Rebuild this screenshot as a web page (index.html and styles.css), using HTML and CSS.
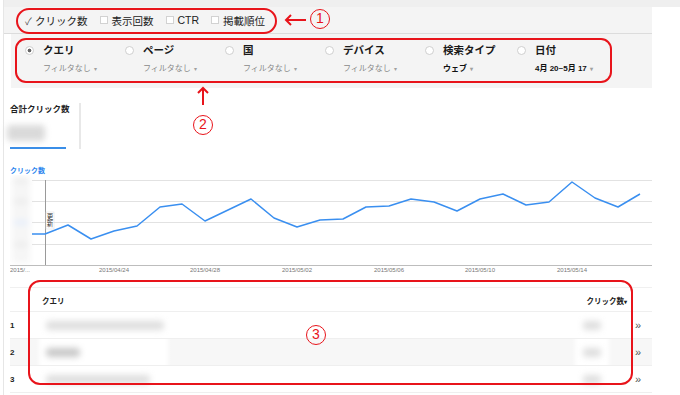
FILE: index.html
```html
<!DOCTYPE html>
<html>
<head>
    <meta charset="utf-8">
    <title>検索アナリティクス</title>
    <link rel="stylesheet" href="styles.css">
</head>
<body>
    <div class="page">
        <div class="topstrip"></div>

        <!-- metric checkboxes -->
        <div class="metrics">
            <span class="metric"><span class="tick">✓</span>クリック数</span>
            <span class="metric"><span class="box"></span>表示回数</span>
            <span class="metric"><span class="box"></span>CTR</span>
            <span class="metric"><span class="box"></span>掲載順位</span>
        </div>

        <!-- grouping / filters -->
        <div class="dims">
            <div class="dim">
                <span class="radio on"></span>
                <div>
                    <div class="dim-title">クエリ</div>
                    <div class="dim-sub">フィルタなし <span class="caret">▾</span></div>
                </div>
            </div>
            <div class="dim">
                <span class="radio"></span>
                <div>
                    <div class="dim-title">ページ</div>
                    <div class="dim-sub">フィルタなし <span class="caret">▾</span></div>
                </div>
            </div>
            <div class="dim">
                <span class="radio"></span>
                <div>
                    <div class="dim-title">国</div>
                    <div class="dim-sub">フィルタなし <span class="caret">▾</span></div>
                </div>
            </div>
            <div class="dim">
                <span class="radio"></span>
                <div>
                    <div class="dim-title">デバイス</div>
                    <div class="dim-sub">フィルタなし <span class="caret">▾</span></div>
                </div>
            </div>
            <div class="dim">
                <span class="radio"></span>
                <div>
                    <div class="dim-title">検索タイプ</div>
                    <div class="dim-sub set">ウェブ <span class="caret">▾</span></div>
                </div>
            </div>
            <div class="dim">
                <span class="radio"></span>
                <div>
                    <div class="dim-title">日付</div>
                    <div class="dim-sub set">4月 20~5月 17 <span class="caret">▾</span></div>
                </div>
            </div>
        </div>

        <div class="summary">
            <div class="total">
                <div class="total-label">合計クリック数</div>
                <div class="blur-value"></div>
                <div class="total-bar"></div>
            </div>
        </div>

        <div class="chart-label">クリック数</div>
        <svg class="chart" width="642" height="100" viewBox="0 0 642 100">
            <defs>
                <filter id="soft" x="-50%" y="-50%" width="200%" height="200%">
                    <feGaussianBlur stdDeviation="3"/>
                </filter>
            </defs>
            <g filter="url(#soft)" fill="#ececec">
                <rect x="2" y="2" width="18" height="86" fill="#f6f6f6"/>
                <rect x="4" y="3" width="14" height="5"/>
                <rect x="4" y="24" width="14" height="5"/>
                <rect x="4" y="45" width="14" height="5" fill="#e6eefb"/>
                <rect x="4" y="67" width="14" height="5"/>
            </g>
            <g stroke="#e2e2e2" stroke-width="1">
                <line x1="22" y1="5.5" x2="642" y2="5.5"/>
                <line x1="22" y1="26.5" x2="642" y2="26.5"/>
                <line x1="22" y1="47.5" x2="642" y2="47.5"/>
                <line x1="22" y1="69.5" x2="642" y2="69.5"/>
            </g>
            <line x1="0" y1="90.5" x2="642" y2="90.5" stroke="#bdbdbd"/>
            <line x1="35.5" y1="5" x2="35.5" y2="90" stroke="#9a9a9a"/>
            <polyline fill="none" stroke="#3a8ff0" stroke-width="1.5" stroke-linejoin="round"
                points="22,59 35,59 58,50 81,64 104,56 127,51 150,32 172,29 195,46 218,35 241,24 264,43 287,52 310,45 333,44 356,32 379,31 401,24 424,27 447,36 470,24 493,19 516,30 539,27 562,7 585,23 608,32 630,19"/>
            <rect x="36" y="37" width="8" height="17" fill="#fff" stroke="#ddd" stroke-width="0.5"/>
            <text class="mark" x="40" y="38.5">更新</text>
            <g class="dates">
                <text x="0" y="97">2015/...</text>
                <text x="104" y="97" text-anchor="middle">2015/04/24</text>
                <text x="195" y="97" text-anchor="middle">2015/04/28</text>
                <text x="287" y="97" text-anchor="middle">2015/05/02</text>
                <text x="379" y="97" text-anchor="middle">2015/05/06</text>
                <text x="470" y="97" text-anchor="middle">2015/05/10</text>
                <text x="562" y="97" text-anchor="middle">2015/05/14</text>
            </g>
        </svg>

        <table class="queries">
            <thead>
                <tr>
                    <th class="num"></th>
                    <th class="query">クエリ</th>
                    <th class="clicks">クリック数<span class="sort">▾</span></th>
                    <th class="more"></th>
                </tr>
            </thead>
            <tbody>
                <tr>
                    <td class="num">1</td>
                    <td class="query"><div class="blur-cell"><span class="blob" style="width: 118px"></span></div></td>
                    <td class="clicks"><div class="blur-num"><span class="blob"></span></div></td>
                    <td class="more">»</td>
                </tr>
                <tr>
                    <td class="num">2</td>
                    <td class="query"><div class="blur-cell"><span class="blob dark" style="width: 34px"></span></div></td>
                    <td class="clicks"><div class="blur-num"><span class="blob"></span></div></td>
                    <td class="more">»</td>
                </tr>
                <tr>
                    <td class="num">3</td>
                    <td class="query"><div class="blur-cell"><span class="blob" style="width: 104px"></span></div></td>
                    <td class="clicks"><div class="blur-num"><span class="blob"></span></div></td>
                    <td class="more">»</td>
                </tr>
            </tbody>
        </table>
    </div>

    <!-- red annotations drawn over the screen -->
    <div class="ring ring-1"></div>
    <div class="ring ring-2"></div>
    <div class="ring ring-3"></div>

    <svg class="arrow arrow-left" width="24" height="12" viewBox="0 0 24 12">
        <path d="M2 6 H22 M7 1 L2 6 L7 11" fill="none" stroke="#e8141b" stroke-width="2"/>
    </svg>
    <svg class="arrow arrow-up" width="12" height="20" viewBox="0 0 12 20">
        <path d="M6 2 V19 M1 7 L6 2 L11 7" fill="none" stroke="#e8141b" stroke-width="2"/>
    </svg>

    <div class="badge badge-1">1</div>
    <div class="badge badge-2">2</div>
    <div class="badge badge-3">3</div>
</body>
</html>
```

FILE: styles.css
```css
html,
body {
	height: 100%;
}

body {
	margin: 0;
	background: #fff;
	font-family: "Liberation Sans", "Noto Sans CJK JP", sans-serif;
	color: #222;
	overflow: hidden;
}

.page {
	margin-left: 3px;
	border-left: 1px solid #e6e6e6;
	min-height: 395px;
}

.topstrip {
	height: 7px;
	background-color: #efefef;
}

/* metric checkboxes */
.metrics {
	display: flex;
	align-items: center;
	gap: 12px;
	height: 26px;
	margin-right: 28px;
	padding-left: 21px;
	background-color: #f4f4f4;
	border-bottom: 1px solid #dcdcdc;
}

.metric {
	display: flex;
	align-items: center;
	gap: 4px;
	font-size: 10.5px;
	color: #222;
}

.tick {
	width: 8px;
	margin-right: -2px;
	font-size: 10px;
	color: #555;
}

.box {
	width: 6px;
	height: 6px;
	border: 1px solid #d2d2d2;
	background-color: #fff;
}

/* grouping / filters */
.dims {
	display: grid;
	grid-template-columns: 100px 100px 100px 100px 92px auto;
	height: 54px;
	box-sizing: border-box;
	margin-left: 7px;
	margin-right: 28px;
	padding: 9px 0 0 14px;
	background-color: #f4f4f4;
}

.dim {
	display: flex;
	align-items: flex-start;
	gap: 9px;
}

.radio {
	flex: none;
	width: 7px;
	height: 7px;
	margin-top: 2.5px;
	border: 1px solid #cfcfcf;
	border-radius: 50%;
	background-color: #fff;
}

.radio.on {
	background: radial-gradient(circle, #666 0, #666 1.6px, #fff 2.2px);
}

.dim-title {
	font-size: 10.5px;
	font-weight: bold;
	line-height: 14px;
	color: #1a1a1a;
}

.dim-sub {
	margin-top: 6px;
	font-size: 8px;
	line-height: 12px;
	color: #8a8a8a;
	white-space: nowrap;
}

.dim-sub.set {
	font-weight: bold;
	color: #111;
}

.caret {
	font-size: 6px;
	color: #a0a0a0;
	margin-left: 1px;
}

/* total */
.summary {
	margin-top: 15px;
}

.total {
	width: 69px;
	height: 46px;
	padding-left: 6px;
	border-right: 2px solid #e8e8e8;
}

.total-label {
	font-size: 8.5px;
	font-weight: bold;
	line-height: 12px;
}

.blur-value {
	width: 38px;
	height: 16px;
	margin: 10px 0 0 -3px;
	border-radius: 4px;
	background-color: #dadada;
	filter: blur(3px);
}

.total-bar {
	width: 56px;
	height: 2px;
	margin-top: 6px;
	background-color: #3a8ee8;
}

/* chart */
.chart-label {
	margin: 17px 0 0 6px;
	font-size: 7px;
	font-weight: bold;
	line-height: 9px;
	color: #2c86ee;
}

.chart {
	display: block;
	margin-left: 6px;
}

.chart .mark {
	font-family: "Noto Sans CJK JP", sans-serif;
	font-size: 6.5px;
	fill: #333;
	writing-mode: vertical-rl;
}

.chart .dates text {
	font-family: "Liberation Sans", sans-serif;
	font-size: 6px;
	fill: #777;
}

/* queries table */
.queries {
	width: 642px;
	margin: 12px 0 0 6px;
	border-collapse: collapse;
}

.queries th,
.queries td {
	padding: 0;
	border-bottom: 1px solid #efefef;
}

.queries thead tr {
	height: 24px;
	border-top: 1px solid #f0f0f0;
}

.queries th {
	font-size: 7.5px;
	font-weight: bold;
	text-align: left;
	vertical-align: middle;
	padding-top: 2px;
}

.queries tbody tr {
	height: 26px;
}

.queries tbody tr:nth-child(2) {
	background-color: #f7f7f7;
}

.queries .num {
	width: 32px;
	font-size: 8px;
	font-weight: bold;
}

.queries th.clicks {
	text-align: right;
}

.sort {
	font-size: 6px;
}

.queries .clicks {
	width: 120px;
	text-align: right;
}

.queries .more {
	width: 17px;
	padding-left: 8px;
	font-size: 11px;
	color: #555;
}

.blur-cell {
	width: 135px;
	height: 26px;
	margin-left: -6px;
	display: flex;
	align-items: center;
	padding-left: 10px;
	box-sizing: border-box;
	background: linear-gradient(90deg, rgba(255,255,255,0) 0, #fff 6px, #fff 129px, rgba(255,255,255,0) 135px);
}

.blur-num {
	display: flex;
	align-items: center;
	justify-content: center;
	width: 40px;
	height: 26px;
	margin-left: auto;
	margin-right: 15px;
	background: linear-gradient(90deg, rgba(255,255,255,0) 0, #fff 6px, #fff 34px, rgba(255,255,255,0) 40px);
}

.blob {
	display: block;
	width: 18px;
	height: 9px;
	border-radius: 4px;
	background-color: #dedede;
	filter: blur(3px);
}

.blob.dark {
	background-color: #c8c8c8;
}

/* red annotations */
.ring {
	position: absolute;
	border: 2px solid #e8141b;
	box-sizing: border-box;
}

.ring-1 {
	left: 16px;
	top: 8px;
	width: 261px;
	height: 26px;
	border-radius: 13px;
}

.ring-2 {
	left: 15px;
	top: 38px;
	width: 597px;
	height: 45px;
	border-radius: 11px;
}

.ring-3 {
	left: 28px;
	top: 280px;
	width: 605px;
	height: 105px;
	border-radius: 12px;
}

.arrow {
	position: absolute;
}

.arrow-left {
	left: 284px;
	top: 14px;
}

.arrow-up {
	left: 197px;
	top: 86px;
}

.badge {
	position: absolute;
	width: 20px;
	height: 20px;
	box-sizing: border-box;
	border: 1.5px solid #e8141b;
	border-radius: 50%;
	color: #e8141b;
	font-family: "Liberation Sans", sans-serif;
	font-size: 14px;
	line-height: 17px;
	text-align: center;
}

.badge-1 {
	left: 310px;
	top: 9px;
}

.badge-2 {
	left: 193px;
	top: 115px;
}

.badge-3 {
	left: 306px;
	top: 325px;
}
```
